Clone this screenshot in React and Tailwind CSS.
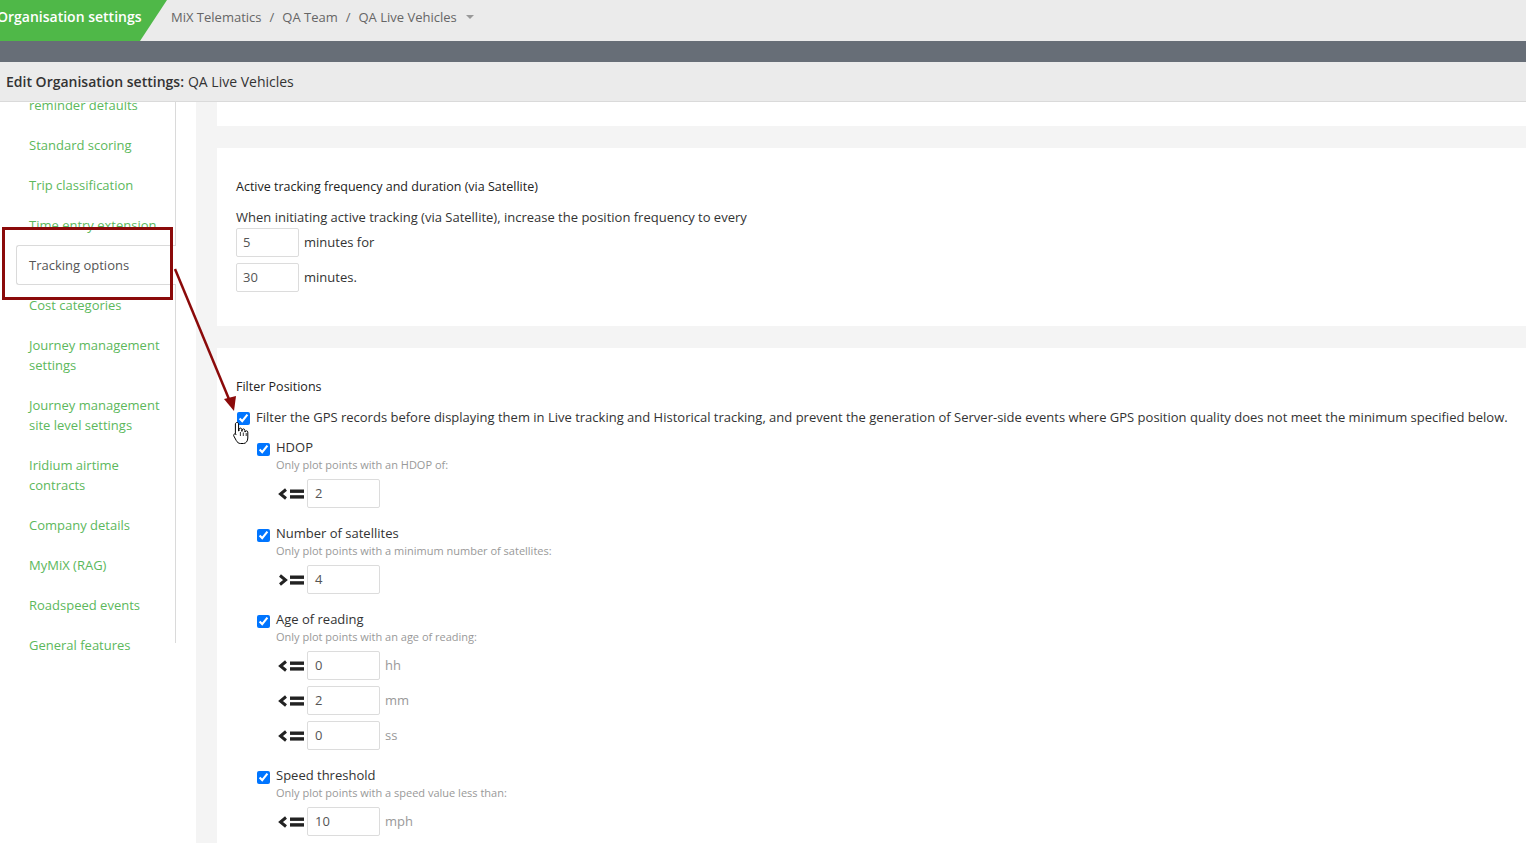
import React from "react";

const sideItems = [
  { label: "reminder defaults", first: true },
  { label: "Standard scoring" },
  { label: "Trip classification" },
  { label: "Time entry extension" },
  { label: "Tracking options", active: true },
  { label: "Cost categories" },
  { label: ["Journey management", "settings"] },
  { label: ["Journey management", "site level settings"] },
  { label: ["Iridium airtime", "contracts"] },
  { label: "Company details" },
  { label: "MyMiX (RAG)" },
  { label: "Roadspeed events" },
  { label: "General features" },
];

const Compare = ({ dir = "le" }) => (
  <svg width="26" height="12" viewBox="0 0 26 12" className="shrink-0">
    <polyline
      points={dir === "le" ? "8,1.5 2.5,6 8,10.5" : "2,1.5 7.5,6 2,10.5"}
      fill="none"
      stroke="#222"
      strokeWidth="3"
    />
    <rect x="12" y="1.5" width="14" height="3.4" fill="#222" />
    <rect x="12" y="7.2" width="14" height="3.4" fill="#222" />
  </svg>
);

const SmallInput = ({ value, unit, dir = "le" }) => (
  <div className="flex items-center h-[29px]">
    <div className="w-[31px] flex items-center pl-[2px]">
      <Compare dir={dir} />
    </div>
    <div className="w-[73px] h-[29px] border border-[#dcdcdc] rounded-[2px] flex items-center pl-[7px] text-[13px] text-[#555]">
      {value}
    </div>
    {unit && <span className="ml-[5px] text-[13px] text-[#999]">{unit}</span>}
  </div>
);

const Check = ({ className = "" }) => (
  <input
    type="checkbox"
    defaultChecked
    readOnly
    className={"w-[13px] h-[13px] m-0 accent-[#0075ff] shrink-0 " + className}
  />
);

const FilterItem = ({ title, desc, children }) => (
  <div className="mt-[16px] first:mt-[10px]">
    <div className="flex items-center h-[20px]">
      <Check className="mt-[3px]" />
      <span className="ml-[6px] text-[13px] text-[#333]">{title}</span>
    </div>
    <div className="pl-[19px]">
      <div className="h-[16px] leading-[14px] text-[11px] text-[#999]">{desc}</div>
      <div className="mt-[5px] flex flex-col gap-[6px]">{children}</div>
    </div>
  </div>
);

const App = () => {
  return (
    <div className="relative h-[843px] overflow-hidden bg-white font-['Open_Sans',sans-serif] text-[#333]">
      {/* top bar */}
      <div className="flex h-[41px] bg-[#ebebeb]">
        <div className="w-[167px] h-full bg-[#4fb848] [clip-path:polygon(0_0,100%_0,calc(100%-27px)_100%,0_100%)] flex items-start pt-[6px] overflow-hidden">
          <span className="-ml-[3px] text-[14px] font-semibold text-white whitespace-nowrap">
            Organisation settings
          </span>
        </div>
        <div className="ml-[4px] flex items-start pt-[8px] text-[13px] text-[#666] whitespace-nowrap">
          <span>MiX Telematics</span>
          <span className="mx-[8px]">/</span>
          <span>QA Team</span>
          <span className="mx-[8px]">/</span>
          <span>QA Live Vehicles</span>
          <span className="ml-[9px] mt-[7px] w-0 h-0 border-l-[4px] border-r-[4px] border-t-[4px] border-l-transparent border-r-transparent border-t-[#999]" />
        </div>
      </div>
      <div className="h-[21px] bg-[#676e77]" />
      <div className="h-[40px] bg-[#ebebeb] border-b border-[#dadada] flex items-center px-[6px] text-[14px] text-[#333]">
        <span className="font-semibold">Edit Organisation settings:</span>
        <span className="ml-[4px]">QA Live Vehicles</span>
      </div>

      {/* body */}
      <div className="flex">
        <div className="w-[176px] shrink-0 overflow-hidden h-[741px]">
          <ul className="border-r border-[#dadada] h-[558px] text-[13px] leading-[20px]">
            {sideItems.map((it, i) => {
              const text = Array.isArray(it.label)
                ? it.label.map((l, j) => (
                    <React.Fragment key={j}>
                      {j > 0 && <br />}
                      {l}
                    </React.Fragment>
                  ))
                : it.label;
              if (it.active) {
                return (
                  <li
                    key={i}
                    className="relative ml-[16px] -mr-px py-[9px] pl-[12px] bg-white border border-r-0 border-[#dadada] rounded-l-[3px] text-[#555]"
                  >
                    {text}
                  </li>
                );
              }
              return (
                <li
                  key={i}
                  className={
                    "py-[10px] pl-[29px] text-[#5cb85c] whitespace-nowrap " +
                    (it.first ? "-mt-[17px]" : "")
                  }
                >
                  {text}
                </li>
              );
            })}
          </ul>
        </div>
        <div className="w-[20px] shrink-0" />
        <div className="flex-1 bg-[#f4f4f4] pl-[21px] h-[741px]">
          <div className="h-[24px] bg-white" />

          <div className="mt-[22px] bg-white pl-[19px] pt-[29px] pb-[34px]">
            <div className="h-[20px] leading-[20px] text-[12.5px] font-medium text-[#222]">
              Active tracking frequency and duration (via Satellite)
            </div>
            <div className="mt-[10px] h-[20px] leading-[20px] text-[13px]">
              When initiating active tracking (via Satellite), increase the position frequency to every
            </div>
            <div className="mt-[1px] flex flex-col gap-[6px]">
              <div className="flex items-center">
                <div className="w-[63px] h-[29px] border border-[#dcdcdc] rounded-[2px] flex items-center pl-[6px] text-[13px] text-[#555]">
                  5
                </div>
                <span className="ml-[5px] text-[13px]">minutes for</span>
              </div>
              <div className="flex items-center">
                <div className="w-[63px] h-[29px] border border-[#dcdcdc] rounded-[2px] flex items-center pl-[6px] text-[13px] text-[#555]">
                  30
                </div>
                <span className="ml-[5px] text-[13px]">minutes.</span>
              </div>
            </div>
          </div>

          <div className="mt-[22px] bg-white pl-[19px] pt-[29px] pb-[40px]">
            <div className="h-[20px] leading-[20px] text-[12.5px] font-medium text-[#222]">
              Filter Positions
            </div>
            <div className="mt-[11px] flex items-center h-[20px] whitespace-nowrap">
              <Check className="ml-[1px] mt-[1px]" />
              <span className="ml-[6px] text-[13px] text-[#333]">
                Filter the GPS records before displaying them in Live tracking and Historical tracking, and prevent the generation of Server-side events where GPS position quality does not meet the minimum specified below.
              </span>
            </div>
            <div className="pl-[21px]">
              <FilterItem title="HDOP" desc="Only plot points with an HDOP of:">
                <SmallInput value="2" />
              </FilterItem>
              <FilterItem
                title="Number of satellites"
                desc="Only plot points with a minimum number of satellites:"
              >
                <SmallInput value="4" dir="ge" />
              </FilterItem>
              <FilterItem title="Age of reading" desc="Only plot points with an age of reading:">
                <SmallInput value="0" unit="hh" />
                <SmallInput value="2" unit="mm" />
                <SmallInput value="0" unit="ss" />
              </FilterItem>
              <FilterItem
                title="Speed threshold"
                desc="Only plot points with a speed value less than:"
              >
                <SmallInput value="10" unit="mph" />
              </FilterItem>
            </div>
          </div>
        </div>
      </div>

      {/* annotation: highlight box */}
      <div className="absolute left-[2px] top-[227px] w-[171px] h-[73px] border-[3px] border-[#8b0a0a] pointer-events-none" />
      {/* annotation: arrow */}
      <svg
        className="absolute left-0 top-0 pointer-events-none"
        width="260"
        height="460"
        viewBox="0 0 260 460"
      >
        <line x1="175" y1="269" x2="231" y2="404" stroke="#8b0a0a" strokeWidth="2.5" />
        <polygon points="234,411 224,399 236,396" fill="#8b0a0a" />
      </svg>
      {/* cursor */}
      <svg
        className="absolute left-[232px] top-[421px] pointer-events-none"
        width="18"
        height="26"
        viewBox="0 0 18 26"
      >
        <path
          d="M5 1.5 C5.9 1.5 6.6 2.2 6.6 3 L6.6 10 L7 10 L7 8.5 C7 7.7 7.7 7.1 8.4 7.1 C9.1 7.1 9.8 7.7 9.8 8.5 L9.8 10.3 L10.1 10.3 L10.1 9.3 C10.1 8.5 10.8 7.9 11.5 7.9 C12.2 7.9 12.9 8.5 12.9 9.3 L12.9 11 L13.2 11 C13.2 10.3 13.8 9.8 14.5 9.8 C15.2 9.8 15.8 10.4 15.8 11.1 L15.8 17 C15.8 20 14 22.5 11.5 22.5 L8.5 22.5 C6.5 22.5 5.2 21.2 4.3 19.6 L1.8 15 C1.4 14.2 1.7 13.3 2.4 13 C3 12.7 3.7 12.9 4.1 13.5 L4 13.6 L3.4 12.7 L3.4 3 C3.4 2.2 4.1 1.5 5 1.5 Z"
          fill="#fff"
          stroke="#000"
          strokeWidth="1"
        />
        <line x1="8.4" y1="11" x2="8.4" y2="15" stroke="#000" strokeWidth="0.8" />
        <line x1="11.3" y1="11.5" x2="11.3" y2="15" stroke="#000" strokeWidth="0.8" />
        <line x1="14.2" y1="12" x2="14.2" y2="15" stroke="#000" strokeWidth="0.8" />
      </svg>
    </div>
  );
};

export default App;
